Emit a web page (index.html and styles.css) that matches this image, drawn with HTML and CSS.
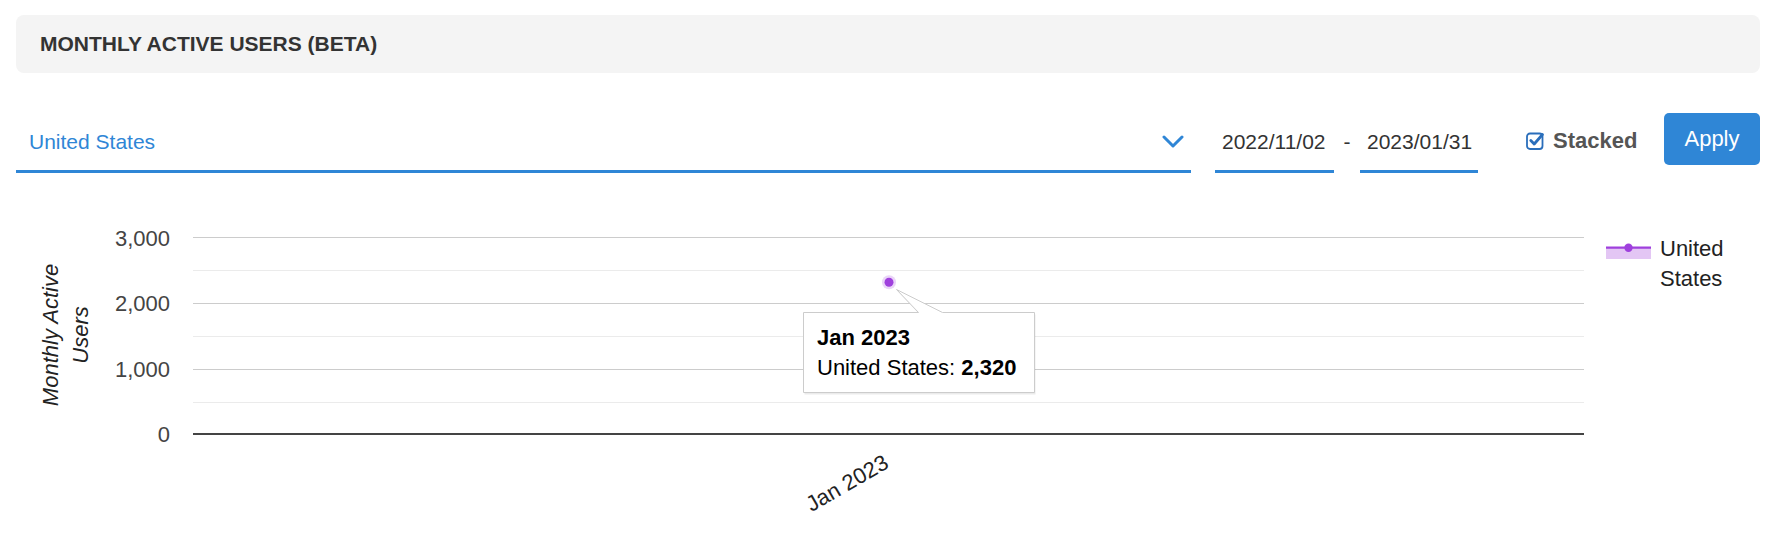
FILE: index.html
```html
<!DOCTYPE html>
<html lang="en">
<head>
<meta charset="utf-8">
<title>Monthly Active Users (Beta)</title>
<link rel="stylesheet" href="styles.css">
</head>
<body>
  <div class="panel-header">MONTHLY ACTIVE USERS (BETA)</div>

  <div class="controls">
    <div class="select">
      <span class="select-value">United States</span>
      <svg class="chevron" width="22" height="14" viewBox="0 0 22 14"><polyline points="2,2 11,11 20,2" fill="none" stroke="#2f86d6" stroke-width="3" stroke-linecap="round" stroke-linejoin="round"/></svg>
    </div>
    <div class="date">2022/11/02</div>
    <span class="dash">-</span>
    <div class="date date-end">2023/01/31</div>
    <label class="stacked">
      <svg class="checkbox" width="19" height="19" viewBox="0 0 19 19">
        <rect x="1" y="2.5" width="15.5" height="15.5" rx="3" fill="#fff" stroke="#2a6ebb" stroke-width="1.8"/>
        <polyline points="4.8,9.5 8.2,13 16.5,3.5" fill="none" stroke="#2a6ebb" stroke-width="2.8" stroke-linecap="round" stroke-linejoin="round"/>
      </svg>
      <span class="stacked-text">Stacked</span>
    </label>
    <button class="apply" type="button">Apply</button>
  </div>

  <svg class="chart" width="1778" height="365" viewBox="0 173 1778 365">
    <g stroke="#ebebeb" stroke-width="1">
      <line x1="193" x2="1584" y1="270.5" y2="270.5"/>
      <line x1="193" x2="1584" y1="336.5" y2="336.5"/>
      <line x1="193" x2="1584" y1="402.5" y2="402.5"/>
    </g>
    <g stroke="#cccccc" stroke-width="1">
      <line x1="193" x2="1584" y1="237.5" y2="237.5"/>
      <line x1="193" x2="1584" y1="303.5" y2="303.5"/>
      <line x1="193" x2="1584" y1="369.5" y2="369.5"/>
    </g>
    <line x1="193" x2="1584" y1="434" y2="434" stroke="#444" stroke-width="2"/>

    <g class="ytick" text-anchor="end">
      <text x="170" y="245.5">3,000</text>
      <text x="170" y="311">2,000</text>
      <text x="170" y="376.5">1,000</text>
      <text x="170" y="442">0</text>
    </g>

    <g class="ytitle" text-anchor="middle">
      <text transform="translate(58,335) rotate(-90)">Monthly Active</text>
      <text transform="translate(88,335) rotate(-90)">Users</text>
    </g>

    <text class="xtick" text-anchor="end" transform="translate(890,467) rotate(-30)">Jan 2023</text>

    <circle cx="889" cy="282.3" r="7" fill="#9f40dd" opacity="0.22"/>
    <circle cx="889" cy="282.3" r="4.5" fill="#9f40dd"/>

    <g class="legend">
      <rect x="1606" y="247.5" width="45" height="11.5" fill="#e3c6f4"/>
      <line x1="1606" x2="1651" y1="247.7" y2="247.7" stroke="#9f40dd" stroke-width="2.2"/>
      <circle cx="1628.5" cy="247.7" r="4.2" fill="#9f40dd"/>
      <text x="1660" y="255.5">United</text>
      <text x="1660" y="285.5">States</text>
    </g>

    <g class="tooltip">
      <path d="M804.5,314.5 L919.5,314.5 L897.5,291 L943.5,314.5 L1035.5,314.5 L1035.5,394.5 L804.5,394.5 Z" fill="#000" opacity="0.08"/>
      <path d="M803.5,312.5 L918.5,312.5 L896.5,289.5 L942.5,312.5 L1034.5,312.5 L1034.5,392.5 L803.5,392.5 Z" fill="#fff" stroke="#cccccc" stroke-width="1"/>
      <text class="tt-title" x="817" y="345">Jan 2023</text>
      <text class="tt-line" x="817" y="375">United States: <tspan class="tt-value">2,320</tspan></text>
    </g>
  </svg>
</body>
</html>
```

FILE: styles.css
```css
html, body {
  margin: 0;
  padding: 0;
  background: #ffffff;
}

body {
  font-family: "Liberation Sans", Arial, Helvetica, sans-serif;
  font-size: 21px;
  color: #333333;
  width: 1778px;
  height: 538px;
  overflow: hidden;
}

.panel-header {
  margin: 15px 18px 0 16px;
  height: 58px;
  box-sizing: border-box;
  padding-left: 24px;
  display: flex;
  align-items: center;
  background: #f4f4f4;
  border-radius: 8px;
  font-weight: bold;
  font-size: 21px;
  color: #333333;
}

.controls {
  display: flex;
  align-items: flex-start;
  margin: 40px 18px 0 16px;
  height: 60px;
}

.select {
  flex: 1;
  height: 60px;
  box-sizing: border-box;
  border-bottom: 3px solid #2f86d6;
  display: flex;
  align-items: center;
  justify-content: space-between;
  padding: 0 7px 0 13px;
}

.select-value {
  color: #2f86d6;
  font-size: 21px;
}

.chevron {
  display: block;
}

.date {
  margin-left: 24px;
  width: 119px;
  height: 60px;
  box-sizing: border-box;
  border-bottom: 3px solid #2f86d6;
  padding-left: 7px;
  display: flex;
  align-items: center;
  color: #333333;
  font-size: 21px;
}

.date-end {
  margin-left: 0;
  width: 118px;
}

.dash {
  width: 26px;
  height: 57px;
  display: flex;
  align-items: center;
  justify-content: center;
  color: #333333;
}

.stacked {
  margin-left: 48px;
  width: 112px;
  height: 55px;
  display: flex;
  align-items: center;
  gap: 8px;
}

.checkbox {
  display: block;
  flex: none;
}

.stacked-text {
  font-weight: bold;
  font-size: 22px;
  color: #555555;
}

.apply {
  margin-left: 26px;
  width: 96px;
  height: 52px;
  border: none;
  border-radius: 5px;
  background: #2f86d6;
  color: #ffffff;
  font-family: "Liberation Sans", Arial, Helvetica, sans-serif;
  font-size: 22px;
  padding: 0;
  cursor: pointer;
}

.chart {
  display: block;
}

.chart text {
  font-family: "Liberation Sans", Arial, Helvetica, sans-serif;
  font-size: 22px;
}

.ytick text {
  fill: #444444;
}

.ytitle text {
  fill: #222222;
  font-style: italic;
}

.xtick {
  fill: #222222;
}

.legend text {
  fill: #222222;
}

.tt-title {
  font-weight: bold;
  fill: #000000;
}

.tt-line {
  fill: #000000;
}

.tt-value {
  font-weight: bold;
}
```
